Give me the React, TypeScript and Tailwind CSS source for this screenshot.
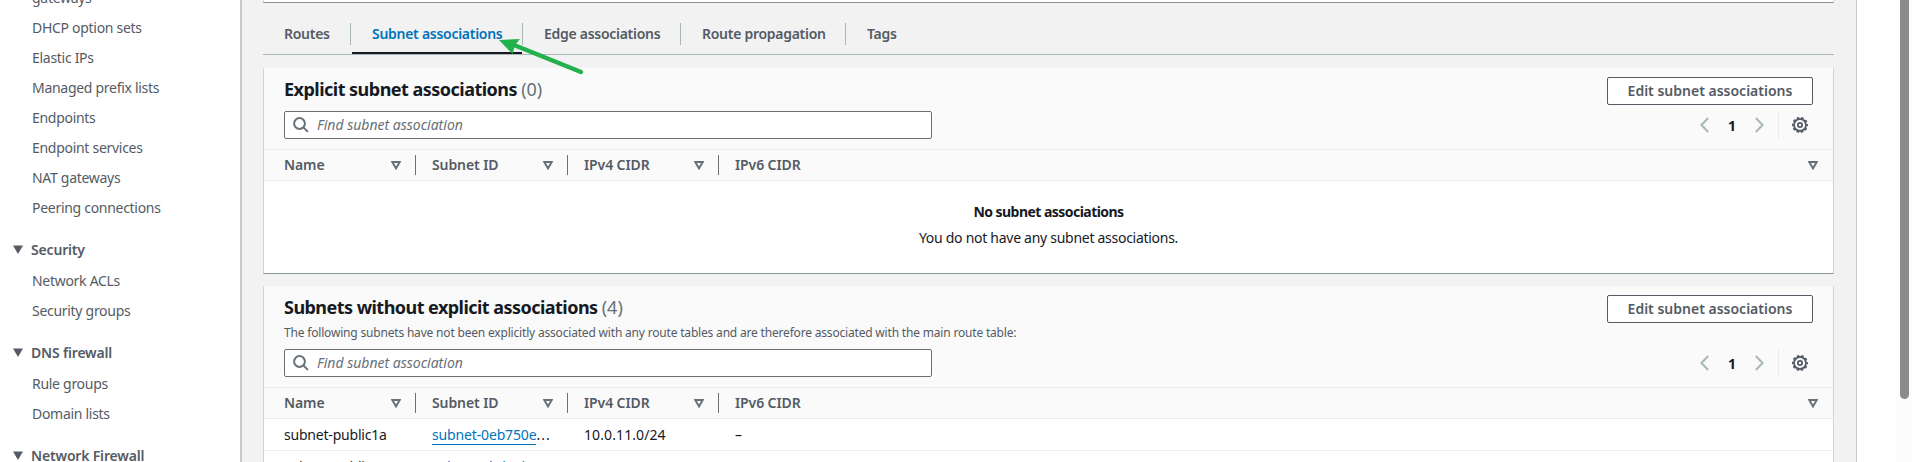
import React from 'react';

const sections = [
  { title: 'Security', items: ['Network ACLs', 'Security groups'] },
  { title: 'DNS firewall', items: ['Rule groups', 'Domain lists'] },
];
const cloudItems = ['gateways', 'DHCP option sets', 'Elastic IPs', 'Managed prefix lists', 'Endpoints', 'Endpoint services', 'NAT gateways', 'Peering connections'];

function NavItem({ label }: { label: string }) {
  return <li className="flex h-[30px] items-center pl-8 tracking-[-0.29px]">{label}</li>;
}

function NavHeading({ label }: { label: string }) {
  return (
    <div className="flex h-[30px] items-center gap-2 pl-[13px] text-[14px] font-semibold tracking-[-0.18px]">
      <svg className="h-[9px] w-[10px]" viewBox="0 0 10 9"><path d="M0 .5h10L5 9z" fill="#545b64" /></svg>
      {label}
    </div>
  );
}

function Sidebar() {
  return (
    <nav className="h-full w-[242px] shrink-0 border-r-2 border-[#c6cacb] bg-white text-[14px] text-[#545b64]">
      <div className="h-full w-[226px]">
        <ul className="-mt-[18px]">{cloudItems.map((i) => <NavItem key={i} label={i} />)}</ul>
        {sections.map((s) => (
          <div key={s.title} className="pt-3">
            <NavHeading label={s.title} />
            <ul className="pt-px">{s.items.map((i) => <NavItem key={i} label={i} />)}</ul>
          </div>
        ))}
        <div className="pt-3"><NavHeading label="Network Firewall" /></div>
      </div>
    </nav>
  );
}

const tabs = [
  { label: 'Routes', cell: 'w-[88px] pl-[21px]' },
  { label: 'Subnet associations', cell: 'w-[172px] pl-[21px]', active: true },
  { label: 'Edge associations', cell: 'w-[158px] pl-[21px]' },
  { label: 'Route propagation', cell: 'w-[165px] pl-[21px]' },
  { label: 'Tags', cell: 'w-[80px] pl-[21px]' },
];

function Tabs() {
  return (
    <div className="flex h-[32px] border-b border-[#aab7b8] text-[14px] font-semibold tracking-[-0.28px] text-[#545b64]">
      {tabs.map((t, i) => (
        <div key={t.label} className={`relative h-[22px] ${i < 4 ? 'border-r border-[#aab7b8]' : ''} ${t.cell} ${t.active ? 'text-[#0073bb]' : ''}`}>
          <span className="whitespace-nowrap leading-[22px]">{t.label}</span>
          {t.active && <span className="absolute top-[29px] right-0 left-[1px] h-[2px] bg-[#16191f]" />}
        </div>
      ))}
    </div>
  );
}

function SortIcon() {
  return <svg className="h-[9px] w-[10px]" viewBox="0 0 10 9"><path d="M1.3 1h7.4L5 7.4z" fill="none" stroke="#687078" strokeWidth="2" /></svg>;
}

function TableHead() {
  return (
    <div className="flex h-[32px] items-center border-y border-[#eaeded] bg-[#fafafa] text-[14px] font-semibold tracking-[-0.1px] text-[#545b64]">
      {['Name', 'Subnet ID', 'IPv4 CIDR'].map((h, i) => (
        <div key={h} className={`flex h-5 items-center justify-between border-r border-[#687078] pr-[14px] ${i === 0 ? 'w-[152px] pl-5' : i === 1 ? 'w-[152px] pl-4' : 'w-[151px] pl-4'}`}>
          <span className="-mt-px">{h}</span>
          <SortIcon />
        </div>
      ))}
      <div className="flex flex-1 items-center justify-between pr-[15px] pl-4"><span className="-mt-px">IPv6 CIDR</span><SortIcon /></div>
    </div>
  );
}

function EditButton() {
  return <button className="h-[28px] w-[206px] rounded-[2px] border border-[#545b64] bg-white text-[14px] font-semibold leading-[26px] text-[#545b64]">Edit subnet associations</button>;
}

function Toolbar() {
  return (
    <div className="flex h-7 items-center justify-between pr-[25px] pl-5">
      <div className="flex h-7 w-[648px] items-center gap-2 rounded-[2px] border border-[#687078] bg-white pl-2">
        <svg className="h-4 w-4" viewBox="0 0 16 16" fill="none" stroke="#687078" strokeWidth="2"><circle cx="6.5" cy="6.5" r="5.4" /><path d="M10.4 10.4l4.5 4.5" /></svg>
        <span className="-mt-px text-[14px] italic text-[#687078]">Find subnet association</span>
      </div>
      <div className="flex h-7 items-center">
        <svg className="h-4 w-[9px]" viewBox="0 0 9 16" fill="none" stroke="#aab7b8" strokeWidth="2"><path d="M8.200 1L1.400 8l6.800 7" /></svg>
        <span className="w-[46px] text-center text-[14px] font-bold text-[#16191f]">1</span>
        <svg className="h-4 w-[9px]" viewBox="0 0 9 16" fill="none" stroke="#aab7b8" strokeWidth="2"><path d="M.8 1L7.600 8 .8 15" /></svg>
        <span className="ml-[14px] h-7 w-px bg-[#eaeded]" />
        <Gear />
      </div>
    </div>
  );
}

function Gear() {
  return (
    <svg className="ml-[13px] h-4 w-4" viewBox="0 0 16 16" fill="none" stroke="#545b64">
      <circle cx="8" cy="8" r="6" strokeWidth="1.8" />
      <circle cx="8" cy="8" r="7.2" strokeWidth="1.6" strokeDasharray="2.5 2.024" strokeDashoffset="1.25" />
      <circle cx="8" cy="8" r="2.1" strokeWidth="1.8" />
    </svg>
  );
}

const card = 'border-x border-[#d0d5d6] bg-white';

export default function App() {
  return (
    <div className="flex h-[462px] w-[1912px] overflow-hidden bg-white font-['Noto_Sans',sans-serif] text-[#16191f]">
      <Sidebar />
      <main className="relative h-full w-[1615px] shrink-0 border-r border-[#c6cacb] bg-[#f2f2f2] pr-[22px] pl-[21px]">
        <div className="h-[3px] border-x border-b border-x-[#d0d5d6] border-b-[#879196] bg-white" />
        <div className="h-5" />
        <Tabs />
        <div className="h-[13px]" />
        <section className={`${card} h-[206px] border-b border-b-[#879596]`}>
          <div className="h-[81px] bg-[#fafafa]">
            <div className="flex h-[43px] items-start justify-between pt-[9px] pr-5 pl-5">
              <h2 className="-mt-px text-[18px] font-bold tracking-[-0.52px] leading-[26px] whitespace-nowrap">Explicit subnet associations <span className="font-normal tracking-normal text-[#687078]">(0)</span></h2>
              <EditButton />
            </div>
            <Toolbar />
          </div>
          <TableHead />
          <div className="flex flex-col items-center text-[14px]">
            <p className="mt-[20px] h-[22px] font-bold tracking-[-0.54px] leading-[22px]">No subnet associations</p>
            <p className="mt-[4px] h-[22px] leading-[22px] tracking-[-0.28px]">You do not have any subnet associations.</p>
          </div>
        </section>
        <div className="h-[12px]" />
        <section className={`${card} h-[200px]`}>
          <div className="h-[101px] bg-[#fafafa]">
            <div className="flex h-[38px] items-start justify-between pt-[9px] pr-5 pl-5">
              <h2 className="-mt-px text-[18px] font-bold tracking-[-0.54px] leading-[26px] whitespace-nowrap">Subnets without explicit associations <span className="font-normal tracking-normal text-[#687078]">(4)</span></h2>
              <EditButton />
            </div>
            <p className="h-[25px] pl-5 text-[12px] leading-[18px] tracking-[-0.185px] text-[#545b64]">The following subnets have not been explicitly associated with any route tables and are therefore associated with the main route table:</p>
            <Toolbar />
          </div>
          <TableHead />
          {['subnet-public1a', 'subnet-public1c'].map((name, i) => (
            <div key={name} className="flex h-8 items-center border-b border-[#eaeded] text-[14px]">
              <span className="w-[152px] pl-5 tracking-[-0.2px]">{name}</span>
              <span className="w-[152px] pl-4"><a className="border-b border-[#0073bb] text-[#0073bb] tracking-[-0.15px]">{i ? 'subnet-0bd41b8' : 'subnet-0eb750e'}</a><span className="tracking-[1px]">...</span></span>
              <span className="w-[151px] pl-4 tracking-[0.1px]">{i ? '10.0.12.0/24' : '10.0.11.0/24'}</span>
              <span className="pl-4">–</span>
            </div>
          ))}
        </section>
        <svg className="absolute top-[36px] left-[256px] h-[42px] w-[90px]" viewBox="0 0 90 42"><path d="M16 9L83 36" stroke="#22b14c" strokeWidth="4.5" strokeLinecap="round" /><path d="M1 4L22 3l-5 6-2.500 9z" fill="#22b14c" /></svg>
      </main>
      <div className="flex flex-1 justify-end bg-white"><div className="w-4 bg-[#fcfcfc] pl-[4px]"><div className="h-[399px] w-[9px] rounded-b-full bg-[#8b8b8b]" /></div></div>
    </div>
  );
}
